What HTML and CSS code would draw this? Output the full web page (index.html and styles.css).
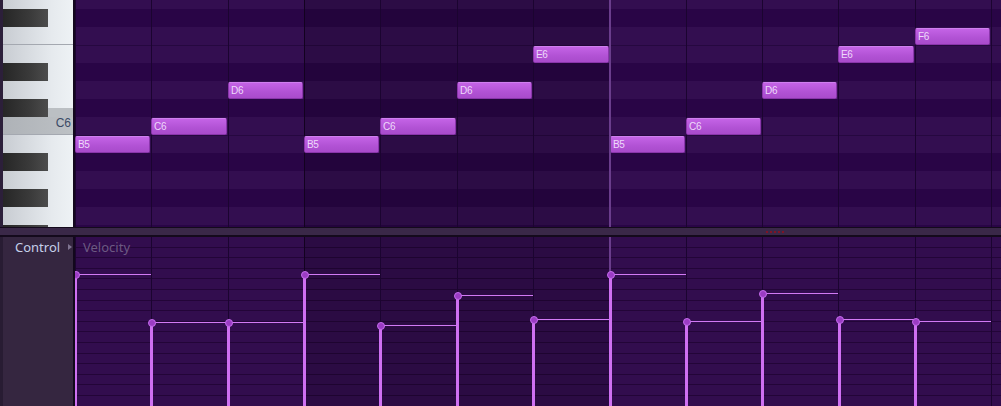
FILE: index.html
```html
<!DOCTYPE html>
<html>
<head>
<meta charset="utf-8">
<link rel="stylesheet" href="styles.css">
</head>
<body>
<div class="app">
  <div class="roll">
    <div class="keys">
      <div class="krows">
        <div class="k w"></div>
        <div class="k b"><i></i></div>
        <div class="k w edge"></div>
        <div class="k w"></div>
        <div class="k b"><i></i></div>
        <div class="k w"></div>
        <div class="k b hl-low"><i></i></div>
        <div class="k w hl edge"><span>C6</span></div>
        <div class="k w"></div>
        <div class="k b"><i></i></div>
        <div class="k w"></div>
        <div class="k b"><i></i></div>
        <div class="k w"></div>
        <div class="k b"><i></i></div>
      </div>
    </div>
    <div class="grid">
      <div class="rows">
        <div class="r l"></div>
        <div class="r d"></div>
        <div class="r l"></div>
        <div class="r l sep"></div>
        <div class="r d"></div>
        <div class="r l"></div>
        <div class="r d"></div>
        <div class="r l"></div>
        <div class="r l sep"></div>
        <div class="r d"></div>
        <div class="r l"></div>
        <div class="r d"></div>
        <div class="r l"></div>
        <div class="r d"></div>
      </div>
      <div class="cols">
        <div class="c c76"></div><div class="c c77"></div><div class="c c76"></div>
        <div class="c c76 alt bar"></div><div class="c c77 alt"></div><div class="c c76 alt"></div><div class="c c76 alt"></div>
        <div class="c c77"></div><div class="c c76"></div><div class="c c76"></div><div class="c c77"></div>
        <div class="c c76"></div><div class="c rest"></div>
      </div>
      <div class="note" style="left:0px;top:136px;width:75px">B5</div>
      <div class="note" style="left:76px;top:118px;width:76px">C6</div>
      <div class="note" style="left:153px;top:82px;width:75px">D6</div>
      <div class="note" style="left:229px;top:136px;width:75px">B5</div>
      <div class="note" style="left:305px;top:118px;width:76px">C6</div>
      <div class="note" style="left:382px;top:82px;width:75px">D6</div>
      <div class="note" style="left:458px;top:46px;width:76px">E6</div>
      <div class="note" style="left:535px;top:136px;width:75px">B5</div>
      <div class="note" style="left:611px;top:118px;width:75px">C6</div>
      <div class="note" style="left:687px;top:82px;width:75px">D6</div>
      <div class="note" style="left:763px;top:46px;width:76px">E6</div>
      <div class="note" style="left:840px;top:28px;width:75px">F6</div>
      <div class="playhead"></div>
    </div>
  </div>
  <div class="divider">
    <div class="grip"><i></i><i></i><i></i><i></i><i></i></div>
  </div>
  <div class="vel">
    <div class="vel-side">
      <span class="ctl">Control</span><b class="tri"></b>
    </div>
    <div class="vel-grid">
      <div class="hlines">
        <div class="h"></div><div class="h"></div><div class="h"></div><div class="h"></div>
        <div class="h"></div><div class="h"></div><div class="h"></div><div class="h"></div>
        <div class="h"></div><div class="h"></div><div class="h"></div><div class="h"></div>
        <div class="h"></div><div class="h"></div><div class="h"></div><div class="h"></div>
      </div>
      <div class="cols">
        <div class="c c76"></div><div class="c c77"></div><div class="c c76"></div>
        <div class="c c76 alt bar"></div><div class="c c77 alt"></div><div class="c c76 alt"></div><div class="c c76 alt"></div>
        <div class="c c77"></div><div class="c c76"></div><div class="c c76"></div><div class="c c77"></div>
        <div class="c c76"></div><div class="c rest"></div>
      </div>
      <div class="vlabel">Velocity</div>
      <div class="playhead"></div>
      <div class="vi" style="left:0px;top:37px"><div class="hline" style="width:76px"></div><div class="stem"></div><div class="dot"></div></div>
      <div class="vi" style="left:76px;top:85px"><div class="hline" style="width:77px"></div><div class="stem"></div><div class="dot"></div></div>
      <div class="vi" style="left:153px;top:85px"><div class="hline" style="width:76px"></div><div class="stem"></div><div class="dot"></div></div>
      <div class="vi" style="left:229px;top:37px"><div class="hline" style="width:76px"></div><div class="stem"></div><div class="dot"></div></div>
      <div class="vi" style="left:305px;top:88px"><div class="hline" style="width:77px"></div><div class="stem"></div><div class="dot"></div></div>
      <div class="vi" style="left:382px;top:58px"><div class="hline" style="width:76px"></div><div class="stem"></div><div class="dot"></div></div>
      <div class="vi" style="left:458px;top:82px"><div class="hline" style="width:76px"></div><div class="stem"></div><div class="dot"></div></div>
      <div class="vi" style="left:535px;top:37px"><div class="hline" style="width:76px"></div><div class="stem"></div><div class="dot"></div></div>
      <div class="vi" style="left:611px;top:84px"><div class="hline" style="width:76px"></div><div class="stem"></div><div class="dot"></div></div>
      <div class="vi" style="left:687px;top:56px"><div class="hline" style="width:76px"></div><div class="stem"></div><div class="dot"></div></div>
      <div class="vi" style="left:764px;top:82px"><div class="hline" style="width:76px"></div><div class="stem"></div><div class="dot"></div></div>
      <div class="vi" style="left:840px;top:84px"><div class="hline" style="width:76px"></div><div class="stem"></div><div class="dot"></div></div>
    </div>
  </div>
</div>
</body>
</html>
```

FILE: styles.css
```css
* { box-sizing: border-box; }
html, body { margin: 0; padding: 0; }
body {
  width: 1001px;
  height: 406px;
  overflow: hidden;
  background: #1a0f24;
  font-family: "Noto Sans", "Liberation Sans", sans-serif;
}
.app { display: flex; flex-direction: column; height: 406px; }

/* ---------- piano roll ---------- */
.roll { display: flex; height: 227px; }
.keys {
  width: 75px;
  border-left: 3px solid #2c1f3a;
  border-right: 2px solid #14081e;
  overflow: hidden;
}
.krows { margin-top: -9px; display: flex; flex-direction: column; }
.k {
  height: 18px;
  flex: none;
  display: flex;
  background: linear-gradient(to right, #c8ccd2, #e6eaee 70%, #eef2f5);
}
.k i {
  display: block;
  width: 45px;
  height: 18px;
  background: linear-gradient(to right, #262626, #3a3a3a 60%, #4c4c4c);
}
.k.edge { box-shadow: inset 0 -1px 0 #a4a8b0; }
.k.hl { background: linear-gradient(to right, #aeb2b7, #bdc1c5); justify-content: flex-end; }
.k.hl-low {
  background:
    linear-gradient(to bottom, transparent 9px, #bbbfc3 9px),
    linear-gradient(to right, #c8ccd2, #e6eaee 70%, #eef2f5);
}
.k.hl span {
  font-family: "Liberation Sans", sans-serif;
  font-size: 12px;
  line-height: 12px;
  margin-top: 0px;
  padding-right: 2px;
  color: #3b4b66;
}

.grid { flex: 1; position: relative; overflow: hidden; background: #2a0548; }
.rows { margin-top: -9px; display: flex; flex-direction: column; }
.r { height: 18px; flex: none; }
.r.l { background: #330e50; }
.r.d { background: #290546; }
.r.sep { box-shadow: inset 0 1px 0 #260840; }

.cols {
  position: absolute;
  inset: 0;
  display: flex;
}
.c { flex: none; border-left: 1px solid #1b0430; height: 100%; }
.c76 { width: 76px; }
.c77 { width: 77px; }
.rest { flex: 1; }
.c.alt { background: rgba(0, 0, 0, 0.13); }
.c.bar { border-left-color: #12021f; }

.note {
  position: absolute;
  height: 17px;
  border: 1px solid #8a36ab;
  border-top-color: #cf7fef;
  border-radius: 2px;
  background: linear-gradient(to bottom, #c463e6, #b152d4 60%, #a94bcb);
  color: #eed9fb;
  font-family: "Liberation Sans", sans-serif;
  font-size: 10px;
  letter-spacing: -0.3px;
  line-height: 15px;
  padding-left: 2px;
  white-space: nowrap;
}
.playhead {
  position: absolute;
  left: 534px;
  top: 0;
  bottom: 0;
  width: 2px;
  background: #6a3d8c;
}

/* ---------- divider ---------- */
.divider {
  height: 10px;
  flex: none;
  background: #3a2848;
  border-top: 1px solid #140a1c;
  border-bottom: 2px solid #140a1c;
  display: flex;
  align-items: center;
  padding-left: 766px;
}
.grip { display: flex; gap: 2px; }
.grip i { display: block; width: 2px; height: 2px; background: #7e1426; }

/* ---------- velocity ---------- */
.vel { flex: 1; display: flex; min-height: 0; }
.vel-side {
  width: 75px;
  background: #352640;
  border-left: 3px solid #281c33;
  border-right: 2px solid #12081c;
  display: flex;
  align-items: flex-start;
  padding: 1px 0 0 12px;
}
.ctl { font-size: 13px; line-height: 18px; color: #c6d0ea; }
.tri {
  width: 0; height: 0;
  margin: 6px 0 0 8px;
  border-top: 3px solid transparent;
  border-bottom: 3px solid transparent;
  border-left: 4px solid #7f7491;
}
.vel-grid { flex: 1; position: relative; overflow: hidden; background: #320d4e; }
.hlines { display: flex; flex-direction: column; }
.h { height: 10.6px; flex: none; border-bottom: 1px solid #230538; }
.vlabel {
  position: absolute;
  left: 8px;
  top: 1px;
  font-size: 13px;
  line-height: 18px;
  color: #6c5982;
}
.vi { position: absolute; width: 0; height: 0; }
.hline { position: absolute; left: 0; top: 0; height: 1px; background: #d27af4; }
.stem { position: absolute; left: -1px; top: 0; width: 3px; height: 200px; background: #cf70f2; }
.dot {
  position: absolute;
  left: -3px;
  top: -3px;
  width: 8px;
  height: 8px;
  border-radius: 50%;
  background: #9b3cc4;
  border: 1px solid #c46cec;
}
```
